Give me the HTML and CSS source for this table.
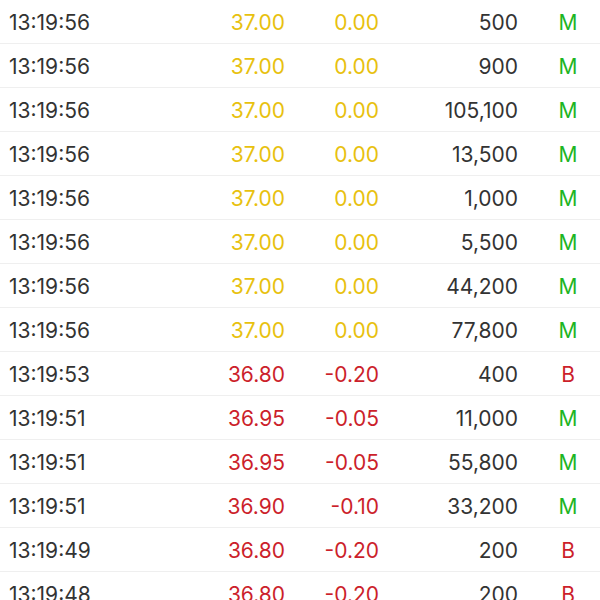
FILE: index.html
```html
<!DOCTYPE html>
<html>
<head>
<meta charset="utf-8">
<link rel="stylesheet" href="styles.css">
</head>
<body>
<div class="list">
  <div class="row"><span class="time">13:19:56</span><span class="price flat">37.00</span><span class="chg flat">0.00</span><span class="vol">500</span><span class="type m">M</span></div>
  <div class="row"><span class="time">13:19:56</span><span class="price flat">37.00</span><span class="chg flat">0.00</span><span class="vol">900</span><span class="type m">M</span></div>
  <div class="row"><span class="time">13:19:56</span><span class="price flat">37.00</span><span class="chg flat">0.00</span><span class="vol">105,100</span><span class="type m">M</span></div>
  <div class="row"><span class="time">13:19:56</span><span class="price flat">37.00</span><span class="chg flat">0.00</span><span class="vol">13,500</span><span class="type m">M</span></div>
  <div class="row"><span class="time">13:19:56</span><span class="price flat">37.00</span><span class="chg flat">0.00</span><span class="vol">1,000</span><span class="type m">M</span></div>
  <div class="row"><span class="time">13:19:56</span><span class="price flat">37.00</span><span class="chg flat">0.00</span><span class="vol">5,500</span><span class="type m">M</span></div>
  <div class="row"><span class="time">13:19:56</span><span class="price flat">37.00</span><span class="chg flat">0.00</span><span class="vol">44,200</span><span class="type m">M</span></div>
  <div class="row"><span class="time">13:19:56</span><span class="price flat">37.00</span><span class="chg flat">0.00</span><span class="vol">77,800</span><span class="type m">M</span></div>
  <div class="row"><span class="time">13:19:53</span><span class="price down">36.80</span><span class="chg down">-0.20</span><span class="vol">400</span><span class="type b">B</span></div>
  <div class="row"><span class="time">13:19:51</span><span class="price down">36.95</span><span class="chg down">-0.05</span><span class="vol">11,000</span><span class="type m">M</span></div>
  <div class="row"><span class="time">13:19:51</span><span class="price down">36.95</span><span class="chg down">-0.05</span><span class="vol">55,800</span><span class="type m">M</span></div>
  <div class="row"><span class="time">13:19:51</span><span class="price down">36.90</span><span class="chg down">-0.10</span><span class="vol">33,200</span><span class="type m">M</span></div>
  <div class="row"><span class="time">13:19:49</span><span class="price down">36.80</span><span class="chg down">-0.20</span><span class="vol">200</span><span class="type b">B</span></div>
  <div class="row"><span class="time">13:19:48</span><span class="price down">36.80</span><span class="chg down">-0.20</span><span class="vol">200</span><span class="type b">B</span></div>
</div>
</body>
</html>
```
FILE: styles.css
```css
html, body {
  margin: 0;
  padding: 0;
  background: #ffffff;
  overflow: hidden;
}
.list {
  border-top: 1px solid #efefef;
  margin-top: -1px;
  font-family: Inter, "Noto Sans", sans-serif;
  font-size: 21px;
  color: #333333;
}
.row {
  display: grid;
  grid-template-columns: 9px 180px 96px 94px 139px 82px;
  height: 43px;
  align-items: center;
  border-bottom: 1px solid #efefef;
  padding-top: 1px;
  box-sizing: border-box;
  height: 44px;
}
.row::before { content: ""; }
.time { text-align: left; }
.price { text-align: right; }
.chg { text-align: right; }
.vol { text-align: right; }
.type { text-align: center; padding-left: 18px; }
.flat { color: #e8c10f; }
.down { color: #cc1f2b; }
.m { color: #1db524; }
.b { color: #cc1f2b; }
```
